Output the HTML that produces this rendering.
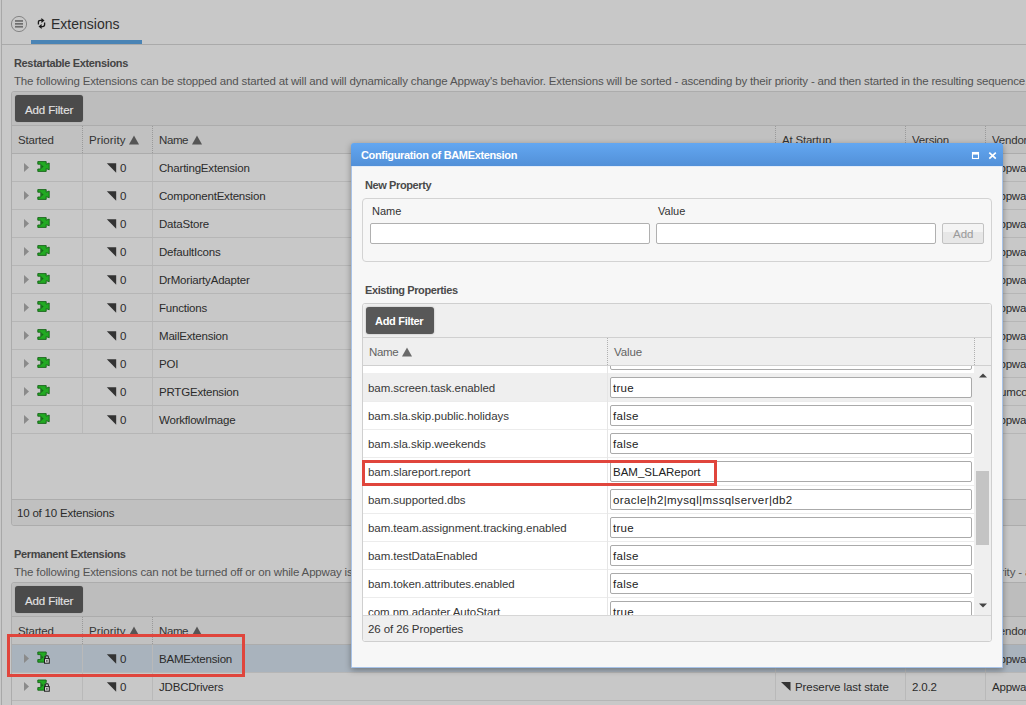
<!DOCTYPE html><html><head><meta charset='utf-8'><style>
*{margin:0;padding:0;box-sizing:border-box}
html,body{width:1026px;height:705px;overflow:hidden;background:#c8c8c8;position:relative;font-family:"Liberation Sans",sans-serif}
div{position:absolute;white-space:nowrap}
.t12{font-size:11.5px;line-height:14px;letter-spacing:-0.2px;color:#2b2b2b}
.t11{font-size:11px;line-height:14px;color:#2b2b2b}
.t14{font-size:14px;line-height:16px;color:#2b2b2b}
.b11{font-size:11px;line-height:14px;font-weight:bold;letter-spacing:-0.35px;color:#2b2b2b}
.b12{font-size:12px;line-height:14px;font-weight:bold;letter-spacing:-0.4px}
</style></head><body><div style='position:absolute;left:1px;top:0px;width:1px;height:705px;background:#a8a8a8'></div>
<div style='position:absolute;left:2px;top:44px;width:1024px;height:1px;background:#aaaaaa'></div>
<svg style='position:absolute;left:10px;top:15px' width='18' height='18' viewBox='0 0 18 18'><circle cx='9' cy='9' r='7.6' fill='none' stroke='#858585' stroke-width='1'/><rect x='5' y='5.1' width='8' height='1.7' fill='#6e6e6e'/><rect x='5' y='8' width='8' height='1.7' fill='#6e6e6e'/><rect x='5' y='10.9' width='8' height='1.7' fill='#6e6e6e'/></svg>
<svg style='position:absolute;left:36px;top:16px' width='11' height='14' viewBox='0 0 11 14'><path d='M2.4 8.4 V6.2 Q2.4 4.4 4.4 4.4 H6' fill='none' stroke='#1a1a1a' stroke-width='1.3'/><path d='M5.4 1.9 L8.5 4.4 L5.4 6.9 Z' fill='#1a1a1a'/><path d='M8.6 6.6 V8.6 Q8.6 10.6 6.6 10.6 H5' fill='none' stroke='#1a1a1a' stroke-width='1.3'/><path d='M5.6 8.1 L2.5 10.6 L5.6 13.1 Z' fill='#1a1a1a'/></svg>
<div class='t14' style='left:51px;top:16px;color:#2d2d2d;'>Extensions</div>
<div style='position:absolute;left:31px;top:40px;width:111px;height:4px;background:#4a84b5'></div>
<div class='b11' style='left:14px;top:56px;color:#444;'>Restartable Extensions</div>
<div class='t12' style='left:14px;top:74px;color:#535353;letter-spacing:-0.16px'>The following Extensions can be stopped and started at will and will dynamically change Appway's behavior. Extensions will be sorted - ascending by their priority - and then started in the resulting sequence.</div>
<div style='position:absolute;left:11px;top:91px;width:1029px;height:435px;border:1px solid #acacac;border-radius:3px;background:#c8c8c8'></div>
<div style='position:absolute;left:12px;top:92px;width:1028px;height:33px;background:#bdbdbd;border-radius:3px 0 0 0'></div>
<div style='position:absolute;left:12px;top:125px;width:1028px;height:1px;background:#acacac'></div>
<div style='position:absolute;left:15px;top:95px;width:68px;height:27px;background:#4b4b4b;border-radius:3px;box-shadow:0 0 1px rgba(0,0,0,.3)'></div>
<div class='b12' style='left:25px;top:103px;color:#e2e2e2;font-weight:normal;font-size:11.5px;-webkit-text-stroke:0.15px #e2e2e2;letter-spacing:-0.1px'>Add Filter</div>
<div style='position:absolute;left:12px;top:126px;width:1028px;height:27px;background:#c1c1c1'></div>
<div style='position:absolute;left:12px;top:153px;width:1028px;height:1px;background:#acacac'></div>
<div style='position:absolute;left:82px;top:126px;width:1px;height:27px;border-left:1px dotted #9a9a9a'></div>
<div style='position:absolute;left:152px;top:126px;width:1px;height:27px;border-left:1px dotted #9a9a9a'></div>
<div style='position:absolute;left:775px;top:126px;width:1px;height:27px;border-left:1px dotted #9a9a9a'></div>
<div style='position:absolute;left:905px;top:126px;width:1px;height:27px;border-left:1px dotted #9a9a9a'></div>
<div style='position:absolute;left:985px;top:126px;width:1px;height:27px;border-left:1px dotted #9a9a9a'></div>
<div class='t12' style='left:18px;top:133px;color:#333;'>Started</div>
<div class='t12' style='left:89px;top:133px;color:#333;letter-spacing:0.1px'>Priority</div>
<svg style='position:absolute;left:129px;top:135px' width='11' height='10'><path d='M0 9.6 L5 0.6 L10 9.6 Z' fill='#555'/></svg>
<div class='t12' style='left:159px;top:133px;color:#333;letter-spacing:-0.40px'>Name</div>
<svg style='position:absolute;left:192px;top:135px' width='11' height='10'><path d='M0 9.6 L5 0.6 L10 9.6 Z' fill='#555'/></svg>
<div class='t12' style='left:782px;top:133px;color:#333;'>At Startup</div>
<div class='t12' style='left:912px;top:133px;color:#333;'>Version</div>
<div class='t12' style='left:992px;top:133px;color:#333;'>Vendor</div>
<div style='position:absolute;left:12px;top:181px;width:1028px;height:1px;background:#b6b6b6'></div>
<div style='position:absolute;left:82px;top:154px;width:1px;height:27px;background:#b9b9b9'></div>
<div style='position:absolute;left:152px;top:154px;width:1px;height:27px;background:#b9b9b9'></div>
<div style='position:absolute;left:775px;top:154px;width:1px;height:27px;background:#b9b9b9'></div>
<div style='position:absolute;left:905px;top:154px;width:1px;height:27px;background:#b9b9b9'></div>
<div style='position:absolute;left:985px;top:154px;width:1px;height:27px;background:#b9b9b9'></div>
<svg style='position:absolute;left:24px;top:163px' width='6' height='9'><path d='M0 0 L5 4.5 L0 9 Z' fill='#8a8a8a'/></svg>
<svg style='position:absolute;left:36px;top:160px' width='14' height='13' viewBox='0 0 14 13'><path d='M1.8 1.6 H10.2 V4.2 L13.2 3 V9.8 L10.2 8.6 V11.4 H1.8 V9 H4.8 V4.2 H1.8 Z' fill='#22aa22' stroke='#17631a' stroke-width='0.9' stroke-linejoin='round'/><path d='M5.4 4.8 L7.6 6.6 L5.4 8.4 Z' fill='#17631a'/></svg>
<svg style='position:absolute;left:106px;top:163px' width='11' height='10'><path d='M0.8 0.3 H10.2 V9.7 Z' fill='#333'/></svg>
<div class='t12' style='left:120px;top:161px;color:#2b2b2b;'>0</div>
<div class='t12' style='left:159px;top:161px;color:#2b2b2b;'>ChartingExtension</div>
<div class='t12' style='left:992px;top:161px;color:#2b2b2b;'>Appway</div>
<div style='position:absolute;left:12px;top:209px;width:1028px;height:1px;background:#b6b6b6'></div>
<div style='position:absolute;left:82px;top:182px;width:1px;height:27px;background:#b9b9b9'></div>
<div style='position:absolute;left:152px;top:182px;width:1px;height:27px;background:#b9b9b9'></div>
<div style='position:absolute;left:775px;top:182px;width:1px;height:27px;background:#b9b9b9'></div>
<div style='position:absolute;left:905px;top:182px;width:1px;height:27px;background:#b9b9b9'></div>
<div style='position:absolute;left:985px;top:182px;width:1px;height:27px;background:#b9b9b9'></div>
<svg style='position:absolute;left:24px;top:191px' width='6' height='9'><path d='M0 0 L5 4.5 L0 9 Z' fill='#8a8a8a'/></svg>
<svg style='position:absolute;left:36px;top:188px' width='14' height='13' viewBox='0 0 14 13'><path d='M1.8 1.6 H10.2 V4.2 L13.2 3 V9.8 L10.2 8.6 V11.4 H1.8 V9 H4.8 V4.2 H1.8 Z' fill='#22aa22' stroke='#17631a' stroke-width='0.9' stroke-linejoin='round'/><path d='M5.4 4.8 L7.6 6.6 L5.4 8.4 Z' fill='#17631a'/></svg>
<svg style='position:absolute;left:106px;top:191px' width='11' height='10'><path d='M0.8 0.3 H10.2 V9.7 Z' fill='#333'/></svg>
<div class='t12' style='left:120px;top:189px;color:#2b2b2b;'>0</div>
<div class='t12' style='left:159px;top:189px;color:#2b2b2b;'>ComponentExtension</div>
<div class='t12' style='left:992px;top:189px;color:#2b2b2b;'>Appway</div>
<div style='position:absolute;left:12px;top:237px;width:1028px;height:1px;background:#b6b6b6'></div>
<div style='position:absolute;left:82px;top:210px;width:1px;height:27px;background:#b9b9b9'></div>
<div style='position:absolute;left:152px;top:210px;width:1px;height:27px;background:#b9b9b9'></div>
<div style='position:absolute;left:775px;top:210px;width:1px;height:27px;background:#b9b9b9'></div>
<div style='position:absolute;left:905px;top:210px;width:1px;height:27px;background:#b9b9b9'></div>
<div style='position:absolute;left:985px;top:210px;width:1px;height:27px;background:#b9b9b9'></div>
<svg style='position:absolute;left:24px;top:219px' width='6' height='9'><path d='M0 0 L5 4.5 L0 9 Z' fill='#8a8a8a'/></svg>
<svg style='position:absolute;left:36px;top:216px' width='14' height='13' viewBox='0 0 14 13'><path d='M1.8 1.6 H10.2 V4.2 L13.2 3 V9.8 L10.2 8.6 V11.4 H1.8 V9 H4.8 V4.2 H1.8 Z' fill='#22aa22' stroke='#17631a' stroke-width='0.9' stroke-linejoin='round'/><path d='M5.4 4.8 L7.6 6.6 L5.4 8.4 Z' fill='#17631a'/></svg>
<svg style='position:absolute;left:106px;top:219px' width='11' height='10'><path d='M0.8 0.3 H10.2 V9.7 Z' fill='#333'/></svg>
<div class='t12' style='left:120px;top:217px;color:#2b2b2b;'>0</div>
<div class='t12' style='left:159px;top:217px;color:#2b2b2b;'>DataStore</div>
<div class='t12' style='left:992px;top:217px;color:#2b2b2b;'>Appway</div>
<div style='position:absolute;left:12px;top:265px;width:1028px;height:1px;background:#b6b6b6'></div>
<div style='position:absolute;left:82px;top:238px;width:1px;height:27px;background:#b9b9b9'></div>
<div style='position:absolute;left:152px;top:238px;width:1px;height:27px;background:#b9b9b9'></div>
<div style='position:absolute;left:775px;top:238px;width:1px;height:27px;background:#b9b9b9'></div>
<div style='position:absolute;left:905px;top:238px;width:1px;height:27px;background:#b9b9b9'></div>
<div style='position:absolute;left:985px;top:238px;width:1px;height:27px;background:#b9b9b9'></div>
<svg style='position:absolute;left:24px;top:247px' width='6' height='9'><path d='M0 0 L5 4.5 L0 9 Z' fill='#8a8a8a'/></svg>
<svg style='position:absolute;left:36px;top:244px' width='14' height='13' viewBox='0 0 14 13'><path d='M1.8 1.6 H10.2 V4.2 L13.2 3 V9.8 L10.2 8.6 V11.4 H1.8 V9 H4.8 V4.2 H1.8 Z' fill='#22aa22' stroke='#17631a' stroke-width='0.9' stroke-linejoin='round'/><path d='M5.4 4.8 L7.6 6.6 L5.4 8.4 Z' fill='#17631a'/></svg>
<svg style='position:absolute;left:106px;top:247px' width='11' height='10'><path d='M0.8 0.3 H10.2 V9.7 Z' fill='#333'/></svg>
<div class='t12' style='left:120px;top:245px;color:#2b2b2b;'>0</div>
<div class='t12' style='left:159px;top:245px;color:#2b2b2b;'>DefaultIcons</div>
<div class='t12' style='left:992px;top:245px;color:#2b2b2b;'>Appway</div>
<div style='position:absolute;left:12px;top:293px;width:1028px;height:1px;background:#b6b6b6'></div>
<div style='position:absolute;left:82px;top:266px;width:1px;height:27px;background:#b9b9b9'></div>
<div style='position:absolute;left:152px;top:266px;width:1px;height:27px;background:#b9b9b9'></div>
<div style='position:absolute;left:775px;top:266px;width:1px;height:27px;background:#b9b9b9'></div>
<div style='position:absolute;left:905px;top:266px;width:1px;height:27px;background:#b9b9b9'></div>
<div style='position:absolute;left:985px;top:266px;width:1px;height:27px;background:#b9b9b9'></div>
<svg style='position:absolute;left:24px;top:275px' width='6' height='9'><path d='M0 0 L5 4.5 L0 9 Z' fill='#8a8a8a'/></svg>
<svg style='position:absolute;left:36px;top:272px' width='14' height='13' viewBox='0 0 14 13'><path d='M1.8 1.6 H10.2 V4.2 L13.2 3 V9.8 L10.2 8.6 V11.4 H1.8 V9 H4.8 V4.2 H1.8 Z' fill='#22aa22' stroke='#17631a' stroke-width='0.9' stroke-linejoin='round'/><path d='M5.4 4.8 L7.6 6.6 L5.4 8.4 Z' fill='#17631a'/></svg>
<svg style='position:absolute;left:106px;top:275px' width='11' height='10'><path d='M0.8 0.3 H10.2 V9.7 Z' fill='#333'/></svg>
<div class='t12' style='left:120px;top:273px;color:#2b2b2b;'>0</div>
<div class='t12' style='left:159px;top:273px;color:#2b2b2b;'>DrMoriartyAdapter</div>
<div class='t12' style='left:992px;top:273px;color:#2b2b2b;'>Appway</div>
<div style='position:absolute;left:12px;top:321px;width:1028px;height:1px;background:#b6b6b6'></div>
<div style='position:absolute;left:82px;top:294px;width:1px;height:27px;background:#b9b9b9'></div>
<div style='position:absolute;left:152px;top:294px;width:1px;height:27px;background:#b9b9b9'></div>
<div style='position:absolute;left:775px;top:294px;width:1px;height:27px;background:#b9b9b9'></div>
<div style='position:absolute;left:905px;top:294px;width:1px;height:27px;background:#b9b9b9'></div>
<div style='position:absolute;left:985px;top:294px;width:1px;height:27px;background:#b9b9b9'></div>
<svg style='position:absolute;left:24px;top:303px' width='6' height='9'><path d='M0 0 L5 4.5 L0 9 Z' fill='#8a8a8a'/></svg>
<svg style='position:absolute;left:36px;top:300px' width='14' height='13' viewBox='0 0 14 13'><path d='M1.8 1.6 H10.2 V4.2 L13.2 3 V9.8 L10.2 8.6 V11.4 H1.8 V9 H4.8 V4.2 H1.8 Z' fill='#22aa22' stroke='#17631a' stroke-width='0.9' stroke-linejoin='round'/><path d='M5.4 4.8 L7.6 6.6 L5.4 8.4 Z' fill='#17631a'/></svg>
<svg style='position:absolute;left:106px;top:303px' width='11' height='10'><path d='M0.8 0.3 H10.2 V9.7 Z' fill='#333'/></svg>
<div class='t12' style='left:120px;top:301px;color:#2b2b2b;'>0</div>
<div class='t12' style='left:159px;top:301px;color:#2b2b2b;'>Functions</div>
<div class='t12' style='left:992px;top:301px;color:#2b2b2b;'>Appway</div>
<div style='position:absolute;left:12px;top:349px;width:1028px;height:1px;background:#b6b6b6'></div>
<div style='position:absolute;left:82px;top:322px;width:1px;height:27px;background:#b9b9b9'></div>
<div style='position:absolute;left:152px;top:322px;width:1px;height:27px;background:#b9b9b9'></div>
<div style='position:absolute;left:775px;top:322px;width:1px;height:27px;background:#b9b9b9'></div>
<div style='position:absolute;left:905px;top:322px;width:1px;height:27px;background:#b9b9b9'></div>
<div style='position:absolute;left:985px;top:322px;width:1px;height:27px;background:#b9b9b9'></div>
<svg style='position:absolute;left:24px;top:331px' width='6' height='9'><path d='M0 0 L5 4.5 L0 9 Z' fill='#8a8a8a'/></svg>
<svg style='position:absolute;left:36px;top:328px' width='14' height='13' viewBox='0 0 14 13'><path d='M1.8 1.6 H10.2 V4.2 L13.2 3 V9.8 L10.2 8.6 V11.4 H1.8 V9 H4.8 V4.2 H1.8 Z' fill='#22aa22' stroke='#17631a' stroke-width='0.9' stroke-linejoin='round'/><path d='M5.4 4.8 L7.6 6.6 L5.4 8.4 Z' fill='#17631a'/></svg>
<svg style='position:absolute;left:106px;top:331px' width='11' height='10'><path d='M0.8 0.3 H10.2 V9.7 Z' fill='#333'/></svg>
<div class='t12' style='left:120px;top:329px;color:#2b2b2b;'>0</div>
<div class='t12' style='left:159px;top:329px;color:#2b2b2b;'>MailExtension</div>
<div class='t12' style='left:992px;top:329px;color:#2b2b2b;'>Appway</div>
<div style='position:absolute;left:12px;top:377px;width:1028px;height:1px;background:#b6b6b6'></div>
<div style='position:absolute;left:82px;top:350px;width:1px;height:27px;background:#b9b9b9'></div>
<div style='position:absolute;left:152px;top:350px;width:1px;height:27px;background:#b9b9b9'></div>
<div style='position:absolute;left:775px;top:350px;width:1px;height:27px;background:#b9b9b9'></div>
<div style='position:absolute;left:905px;top:350px;width:1px;height:27px;background:#b9b9b9'></div>
<div style='position:absolute;left:985px;top:350px;width:1px;height:27px;background:#b9b9b9'></div>
<svg style='position:absolute;left:24px;top:359px' width='6' height='9'><path d='M0 0 L5 4.5 L0 9 Z' fill='#8a8a8a'/></svg>
<svg style='position:absolute;left:36px;top:356px' width='14' height='13' viewBox='0 0 14 13'><path d='M1.8 1.6 H10.2 V4.2 L13.2 3 V9.8 L10.2 8.6 V11.4 H1.8 V9 H4.8 V4.2 H1.8 Z' fill='#22aa22' stroke='#17631a' stroke-width='0.9' stroke-linejoin='round'/><path d='M5.4 4.8 L7.6 6.6 L5.4 8.4 Z' fill='#17631a'/></svg>
<svg style='position:absolute;left:106px;top:359px' width='11' height='10'><path d='M0.8 0.3 H10.2 V9.7 Z' fill='#333'/></svg>
<div class='t12' style='left:120px;top:357px;color:#2b2b2b;'>0</div>
<div class='t12' style='left:159px;top:357px;color:#2b2b2b;'>POI</div>
<div class='t12' style='left:992px;top:357px;color:#2b2b2b;'>Appway</div>
<div style='position:absolute;left:12px;top:405px;width:1028px;height:1px;background:#b6b6b6'></div>
<div style='position:absolute;left:82px;top:378px;width:1px;height:27px;background:#b9b9b9'></div>
<div style='position:absolute;left:152px;top:378px;width:1px;height:27px;background:#b9b9b9'></div>
<div style='position:absolute;left:775px;top:378px;width:1px;height:27px;background:#b9b9b9'></div>
<div style='position:absolute;left:905px;top:378px;width:1px;height:27px;background:#b9b9b9'></div>
<div style='position:absolute;left:985px;top:378px;width:1px;height:27px;background:#b9b9b9'></div>
<svg style='position:absolute;left:24px;top:387px' width='6' height='9'><path d='M0 0 L5 4.5 L0 9 Z' fill='#8a8a8a'/></svg>
<svg style='position:absolute;left:36px;top:384px' width='14' height='13' viewBox='0 0 14 13'><path d='M1.8 1.6 H10.2 V4.2 L13.2 3 V9.8 L10.2 8.6 V11.4 H1.8 V9 H4.8 V4.2 H1.8 Z' fill='#22aa22' stroke='#17631a' stroke-width='0.9' stroke-linejoin='round'/><path d='M5.4 4.8 L7.6 6.6 L5.4 8.4 Z' fill='#17631a'/></svg>
<svg style='position:absolute;left:106px;top:387px' width='11' height='10'><path d='M0.8 0.3 H10.2 V9.7 Z' fill='#333'/></svg>
<div class='t12' style='left:120px;top:385px;color:#2b2b2b;'>0</div>
<div class='t12' style='left:159px;top:385px;color:#2b2b2b;'>PRTGExtension</div>
<div class='t12' style='left:992px;top:385px;color:#2b2b2b;'>Numcom</div>
<div style='position:absolute;left:12px;top:433px;width:1028px;height:1px;background:#b6b6b6'></div>
<div style='position:absolute;left:82px;top:406px;width:1px;height:27px;background:#b9b9b9'></div>
<div style='position:absolute;left:152px;top:406px;width:1px;height:27px;background:#b9b9b9'></div>
<div style='position:absolute;left:775px;top:406px;width:1px;height:27px;background:#b9b9b9'></div>
<div style='position:absolute;left:905px;top:406px;width:1px;height:27px;background:#b9b9b9'></div>
<div style='position:absolute;left:985px;top:406px;width:1px;height:27px;background:#b9b9b9'></div>
<svg style='position:absolute;left:24px;top:415px' width='6' height='9'><path d='M0 0 L5 4.5 L0 9 Z' fill='#8a8a8a'/></svg>
<svg style='position:absolute;left:36px;top:412px' width='14' height='13' viewBox='0 0 14 13'><path d='M1.8 1.6 H10.2 V4.2 L13.2 3 V9.8 L10.2 8.6 V11.4 H1.8 V9 H4.8 V4.2 H1.8 Z' fill='#22aa22' stroke='#17631a' stroke-width='0.9' stroke-linejoin='round'/><path d='M5.4 4.8 L7.6 6.6 L5.4 8.4 Z' fill='#17631a'/></svg>
<svg style='position:absolute;left:106px;top:415px' width='11' height='10'><path d='M0.8 0.3 H10.2 V9.7 Z' fill='#333'/></svg>
<div class='t12' style='left:120px;top:413px;color:#2b2b2b;'>0</div>
<div class='t12' style='left:159px;top:413px;color:#2b2b2b;'>WorkflowImage</div>
<div class='t12' style='left:992px;top:413px;color:#2b2b2b;'>Appway</div>
<div style='position:absolute;left:12px;top:499px;width:1028px;height:1px;background:#acacac'></div>
<div style='position:absolute;left:12px;top:500px;width:1028px;height:25px;background:#c0c0c0;border-radius:0 0 0 3px'></div>
<div class='t12' style='left:17px;top:506px;color:#2b2b2b;'>10 of 10 Extensions</div>
<div class='b11' style='left:14px;top:547px;color:#444;'>Permanent Extensions</div>
<div class='t12' style='left:14px;top:565px;color:#535353;letter-spacing:-0.16px'>The following Extensions can not be turned off or on while Appway is running. Extensions will be sorted - ascending by their priority - and then started in the resulting sequence.</div>
<div style='position:absolute;left:11px;top:582px;width:1029px;height:178px;border:1px solid #acacac;border-radius:3px;background:#c8c8c8'></div>
<div style='position:absolute;left:12px;top:583px;width:1028px;height:33px;background:#bdbdbd;border-radius:3px 0 0 0'></div>
<div style='position:absolute;left:12px;top:616px;width:1028px;height:1px;background:#acacac'></div>
<div style='position:absolute;left:15px;top:586px;width:68px;height:27px;background:#4b4b4b;border-radius:3px;box-shadow:0 0 1px rgba(0,0,0,.3)'></div>
<div class='b12' style='left:25px;top:594px;color:#e2e2e2;font-weight:normal;font-size:11.5px;-webkit-text-stroke:0.15px #e2e2e2;letter-spacing:-0.1px'>Add Filter</div>
<div style='position:absolute;left:12px;top:617px;width:1028px;height:27px;background:#c1c1c1'></div>
<div style='position:absolute;left:12px;top:644px;width:1028px;height:1px;background:#acacac'></div>
<div style='position:absolute;left:82px;top:617px;width:1px;height:27px;border-left:1px dotted #9a9a9a'></div>
<div style='position:absolute;left:152px;top:617px;width:1px;height:27px;border-left:1px dotted #9a9a9a'></div>
<div style='position:absolute;left:775px;top:617px;width:1px;height:27px;border-left:1px dotted #9a9a9a'></div>
<div style='position:absolute;left:905px;top:617px;width:1px;height:27px;border-left:1px dotted #9a9a9a'></div>
<div style='position:absolute;left:985px;top:617px;width:1px;height:27px;border-left:1px dotted #9a9a9a'></div>
<div class='t12' style='left:18px;top:624px;color:#333;'>Started</div>
<div class='t12' style='left:89px;top:624px;color:#333;letter-spacing:0.1px'>Priority</div>
<svg style='position:absolute;left:129px;top:626px' width='11' height='10'><path d='M0 9.6 L5 0.6 L10 9.6 Z' fill='#555'/></svg>
<div class='t12' style='left:159px;top:624px;color:#333;letter-spacing:-0.40px'>Name</div>
<svg style='position:absolute;left:192px;top:626px' width='11' height='10'><path d='M0 9.6 L5 0.6 L10 9.6 Z' fill='#555'/></svg>
<div class='t12' style='left:782px;top:624px;color:#333;'>At Startup</div>
<div class='t12' style='left:912px;top:624px;color:#333;'>Version</div>
<div class='t12' style='left:992px;top:624px;color:#333;'>Vendor</div>
<div style='position:absolute;left:12px;top:645px;width:1028px;height:28px;background:#a9b3bd'></div>
<div style='position:absolute;left:12px;top:672px;width:1028px;height:1px;background:#b6b6b6'></div>
<div style='position:absolute;left:82px;top:645px;width:1px;height:27px;background:#b9b9b9'></div>
<div style='position:absolute;left:152px;top:645px;width:1px;height:27px;background:#b9b9b9'></div>
<div style='position:absolute;left:775px;top:645px;width:1px;height:27px;background:#b9b9b9'></div>
<div style='position:absolute;left:905px;top:645px;width:1px;height:27px;background:#b9b9b9'></div>
<div style='position:absolute;left:985px;top:645px;width:1px;height:27px;background:#b9b9b9'></div>
<svg style='position:absolute;left:24px;top:654px' width='6' height='9'><path d='M0 0 L5 4.5 L0 9 Z' fill='#8a8a8a'/></svg>
<svg style='position:absolute;left:36px;top:650px' width='15' height='14' viewBox='0 0 15 14'><path d='M1.8 2 H10.2 V4.6 L8.6 6 V12.2 H1.8 V9.6 H4.8 V4.6 H1.8 Z' fill='#22aa22' stroke='#17631a' stroke-width='0.9' stroke-linejoin='round'/><path d='M5.4 5.4 L7.4 7.2 L5.4 9 Z' fill='#17631a'/><path d='M9.3 8.6 V7.2 A1.6 1.6 0 0 1 12.5 7.2 V8.6' fill='none' stroke='#2e2e2e' stroke-width='1.1'/><rect x='8.5' y='8.6' width='4.8' height='4.6' fill='#d6d6d6' stroke='#1e1e1e' stroke-width='1'/><rect x='10.4' y='10' width='1' height='1.8' fill='#222'/></svg>
<svg style='position:absolute;left:106px;top:654px' width='11' height='10'><path d='M0.8 0.3 H10.2 V9.7 Z' fill='#333'/></svg>
<div class='t12' style='left:120px;top:652px;color:#2b2b2b;'>0</div>
<div class='t12' style='left:159px;top:652px;color:#2b2b2b;'>BAMExtension</div>
<div class='t12' style='left:992px;top:652px;color:#2b2b2b;'>Appway</div>
<div style='position:absolute;left:12px;top:700px;width:1028px;height:1px;background:#b6b6b6'></div>
<div style='position:absolute;left:82px;top:673px;width:1px;height:27px;background:#b9b9b9'></div>
<div style='position:absolute;left:152px;top:673px;width:1px;height:27px;background:#b9b9b9'></div>
<div style='position:absolute;left:775px;top:673px;width:1px;height:27px;background:#b9b9b9'></div>
<div style='position:absolute;left:905px;top:673px;width:1px;height:27px;background:#b9b9b9'></div>
<div style='position:absolute;left:985px;top:673px;width:1px;height:27px;background:#b9b9b9'></div>
<svg style='position:absolute;left:24px;top:682px' width='6' height='9'><path d='M0 0 L5 4.5 L0 9 Z' fill='#8a8a8a'/></svg>
<svg style='position:absolute;left:36px;top:678px' width='15' height='14' viewBox='0 0 15 14'><path d='M1.8 2 H10.2 V4.6 L8.6 6 V12.2 H1.8 V9.6 H4.8 V4.6 H1.8 Z' fill='#22aa22' stroke='#17631a' stroke-width='0.9' stroke-linejoin='round'/><path d='M5.4 5.4 L7.4 7.2 L5.4 9 Z' fill='#17631a'/><path d='M9.3 8.6 V7.2 A1.6 1.6 0 0 1 12.5 7.2 V8.6' fill='none' stroke='#2e2e2e' stroke-width='1.1'/><rect x='8.5' y='8.6' width='4.8' height='4.6' fill='#d6d6d6' stroke='#1e1e1e' stroke-width='1'/><rect x='10.4' y='10' width='1' height='1.8' fill='#222'/></svg>
<svg style='position:absolute;left:106px;top:682px' width='11' height='10'><path d='M0.8 0.3 H10.2 V9.7 Z' fill='#333'/></svg>
<div class='t12' style='left:120px;top:680px;color:#2b2b2b;'>0</div>
<div class='t12' style='left:159px;top:680px;color:#2b2b2b;'>JDBCDrivers</div>
<div class='t12' style='left:992px;top:680px;color:#2b2b2b;'>Appway</div>
<div class='t12' style='left:982px;top:565px;color:#535353;letter-spacing:-0.16px'>priority - and then started in the resulting sequence.</div>
<svg style='position:absolute;left:781px;top:682px' width='10' height='9'><path d='M0 0 H9.5 V9 Z' fill='#333'/></svg>
<div class='t12' style='left:795px;top:680px;color:#2b2b2b;letter-spacing:-0.08px'>Preserve last state</div>
<div class='t12' style='left:912px;top:680px;color:#2b2b2b;'>2.0.2</div>
<div style='position:absolute;left:7px;top:634px;width:238px;height:43px;border:3px solid #e0453c'></div>
<div style='position:absolute;left:351px;top:143px;width:652px;height:525px;background:#f7f7f7;border:1px solid #a8c3e8;border-radius:3px 3px 0 0;box-shadow:0 2px 6px rgba(0,0,0,.35)'></div>
<div style='position:absolute;left:351px;top:143px;width:652px;height:23px;background:linear-gradient(#63a7f1,#5290d8);border-radius:3px 3px 0 0'></div>
<div style='position:absolute;left:352px;top:166px;width:650px;height:1px;background:#e3ecf8'></div>
<div class='b11' style='left:361px;top:148px;color:#ffffff;'>Configuration of BAMExtension</div>
<svg style='position:absolute;left:971px;top:151px' width='10' height='10'><rect x='1.5' y='1.5' width='6' height='6' fill='none' stroke='#fff' stroke-width='1.1'/><rect x='1' y='1' width='7' height='2.6' fill='#fff'/></svg>
<svg style='position:absolute;left:987px;top:151px' width='10' height='10'><path d='M2.3 1.6 L8.8 7.6 M8.8 1.6 L2.3 7.6' stroke='#fff' stroke-width='1.7'/></svg>
<div class='b11' style='left:365px;top:178px;color:#4a4a4a;letter-spacing:-0.4px'>New Property</div>
<div style='position:absolute;left:362px;top:198px;width:630px;height:64px;border:1px solid #d3d3d3;border-radius:4px'></div>
<div class='t11' style='left:372px;top:204px;color:#333;'>Name</div>
<div class='t11' style='left:658px;top:204px;color:#333;'>Value</div>
<div style='position:absolute;left:370px;top:223px;width:280px;height:21px;background:#fff;border:1px solid #b0b0b0;border-radius:2px'></div>
<div style='position:absolute;left:656px;top:223px;width:280px;height:21px;background:#fff;border:1px solid #b0b0b0;border-radius:2px'></div>
<div style='position:absolute;left:942px;top:223px;width:42px;height:21px;background:linear-gradient(#f4f4f4 0,#f4f4f4 40%,#e7e7e7 40%);border:1px solid #c2c2c2;border-radius:2px'></div>
<div class='t12' style='left:953px;top:227px;color:#9a9a9a;letter-spacing:0;font-size:11.5px'>Add</div>
<div class='b11' style='left:365px;top:283px;color:#4a4a4a;letter-spacing:-0.4px'>Existing Properties</div>
<div style='position:absolute;left:362px;top:303px;width:630px;height:339px;background:#fff;border:1px solid #cfcfcf;border-radius:3px'></div>
<div style='position:absolute;left:363px;top:304px;width:628px;height:33px;background:#efefef;border-radius:3px 3px 0 0'></div>
<div style='position:absolute;left:363px;top:337px;width:628px;height:1px;background:#d0d0d0'></div>
<div style='position:absolute;left:366px;top:307px;width:68px;height:27px;background:#585858;border-radius:3px;box-shadow:0 0 2px rgba(0,0,0,.3)'></div>
<div class='b12' style='left:375px;top:314px;color:#fff;font-weight:bold;font-size:11px;letter-spacing:-0.3px'>Add Filter</div>
<div style='position:absolute;left:363px;top:338px;width:628px;height:27px;background:#efefef'></div>
<div style='position:absolute;left:363px;top:365px;width:628px;height:1px;background:#d0d0d0'></div>
<div style='position:absolute;left:607px;top:338px;width:1px;height:27px;border-left:1px dotted #b0b0b0'></div>
<div style='position:absolute;left:974px;top:338px;width:1px;height:27px;border-left:1px dotted #b0b0b0'></div>
<div class='t12' style='left:369px;top:345px;color:#636363;letter-spacing:-0.35px'>Name</div>
<svg style='position:absolute;left:402px;top:347px' width='10' height='10'><path d='M0 9.6 L5 0.4 L10 9.6 Z' fill='#6a6a6a'/></svg>
<div class='t12' style='left:614px;top:345px;color:#636363;letter-spacing:-0.10px'>Value</div>
<div style='left:363px;top:366px;width:611px;height:249px;overflow:hidden'>
<div style='left:0;top:7px;width:611px;height:1px;background:#ececec'></div>
<div style='left:244px;top:-21px;width:1px;height:28px;background:#e6e6e6'></div>
<div style='left:247px;top:-17px;width:362px;height:21px;background:#fff;border:1px solid #aaa;border-radius:2px'></div>
<div style='left:0;top:7px;width:611px;height:28px;background:#efefef'></div>
<div style='left:0;top:35px;width:611px;height:1px;background:#ececec'></div>
<div style='left:244px;top:7px;width:1px;height:28px;background:#e6e6e6'></div>
<div style='left:247px;top:11px;width:362px;height:21px;background:#fff;border:1px solid #aaa;border-radius:2px'></div>
<div class='t12' style='left:5px;top:15px;color:#383838;letter-spacing:-0.06px'>bam.screen.task.enabled</div>
<div class='t12' style='left:250px;top:15px;color:#222;letter-spacing:0.3px'>true</div>
<div style='left:0;top:63px;width:611px;height:1px;background:#ececec'></div>
<div style='left:244px;top:35px;width:1px;height:28px;background:#e6e6e6'></div>
<div style='left:247px;top:39px;width:362px;height:21px;background:#fff;border:1px solid #aaa;border-radius:2px'></div>
<div class='t12' style='left:5px;top:43px;color:#383838;letter-spacing:-0.06px'>bam.sla.skip.public.holidays</div>
<div class='t12' style='left:250px;top:43px;color:#222;letter-spacing:0.3px'>false</div>
<div style='left:0;top:91px;width:611px;height:1px;background:#ececec'></div>
<div style='left:244px;top:63px;width:1px;height:28px;background:#e6e6e6'></div>
<div style='left:247px;top:67px;width:362px;height:21px;background:#fff;border:1px solid #aaa;border-radius:2px'></div>
<div class='t12' style='left:5px;top:71px;color:#383838;letter-spacing:-0.06px'>bam.sla.skip.weekends</div>
<div class='t12' style='left:250px;top:71px;color:#222;letter-spacing:0.3px'>false</div>
<div style='left:0;top:119px;width:611px;height:1px;background:#ececec'></div>
<div style='left:244px;top:91px;width:1px;height:28px;background:#e6e6e6'></div>
<div style='left:247px;top:95px;width:362px;height:21px;background:#fff;border:1px solid #aaa;border-radius:2px'></div>
<div class='t12' style='left:5px;top:99px;color:#383838;letter-spacing:-0.06px'>bam.slareport.report</div>
<div class='t12' style='left:250px;top:99px;color:#222;letter-spacing:0px'>BAM_SLAReport</div>
<div style='left:0;top:147px;width:611px;height:1px;background:#ececec'></div>
<div style='left:244px;top:119px;width:1px;height:28px;background:#e6e6e6'></div>
<div style='left:247px;top:123px;width:362px;height:21px;background:#fff;border:1px solid #aaa;border-radius:2px'></div>
<div class='t12' style='left:5px;top:127px;color:#383838;letter-spacing:-0.06px'>bam.supported.dbs</div>
<div class='t12' style='left:250px;top:127px;color:#222;letter-spacing:0.4px'>oracle|h2|mysql|mssqlserver|db2</div>
<div style='left:0;top:175px;width:611px;height:1px;background:#ececec'></div>
<div style='left:244px;top:147px;width:1px;height:28px;background:#e6e6e6'></div>
<div style='left:247px;top:151px;width:362px;height:21px;background:#fff;border:1px solid #aaa;border-radius:2px'></div>
<div class='t12' style='left:5px;top:155px;color:#383838;letter-spacing:-0.06px'>bam.team.assignment.tracking.enabled</div>
<div class='t12' style='left:250px;top:155px;color:#222;letter-spacing:0.3px'>true</div>
<div style='left:0;top:203px;width:611px;height:1px;background:#ececec'></div>
<div style='left:244px;top:175px;width:1px;height:28px;background:#e6e6e6'></div>
<div style='left:247px;top:179px;width:362px;height:21px;background:#fff;border:1px solid #aaa;border-radius:2px'></div>
<div class='t12' style='left:5px;top:183px;color:#383838;letter-spacing:-0.06px'>bam.testDataEnabled</div>
<div class='t12' style='left:250px;top:183px;color:#222;letter-spacing:0.3px'>false</div>
<div style='left:0;top:231px;width:611px;height:1px;background:#ececec'></div>
<div style='left:244px;top:203px;width:1px;height:28px;background:#e6e6e6'></div>
<div style='left:247px;top:207px;width:362px;height:21px;background:#fff;border:1px solid #aaa;border-radius:2px'></div>
<div class='t12' style='left:5px;top:211px;color:#383838;letter-spacing:-0.06px'>bam.token.attributes.enabled</div>
<div class='t12' style='left:250px;top:211px;color:#222;letter-spacing:0.3px'>false</div>
<div style='left:0;top:259px;width:611px;height:1px;background:#ececec'></div>
<div style='left:244px;top:231px;width:1px;height:28px;background:#e6e6e6'></div>
<div style='left:247px;top:235px;width:362px;height:21px;background:#fff;border:1px solid #aaa;border-radius:2px'></div>
<div class='t12' style='left:5px;top:239px;color:#383838;letter-spacing:-0.06px'>com.nm.adapter.AutoStart</div>
<div class='t12' style='left:250px;top:239px;color:#222;letter-spacing:0.3px'>true</div>
</div>
<div style='position:absolute;left:974px;top:366px;width:17px;height:249px;background:#efefef'></div>
<div style='position:absolute;left:976px;top:471px;width:13px;height:74px;background:#c4c4c4'></div>
<svg style='position:absolute;left:979px;top:373px' width='8' height='5'><path d='M0 4.5 L4 0.5 L8 4.5 Z' fill='#444'/></svg>
<svg style='position:absolute;left:979px;top:603px' width='8' height='5'><path d='M0 0.5 L4 4.5 L8 0.5 Z' fill='#444'/></svg>
<div style='position:absolute;left:363px;top:615px;width:628px;height:1px;background:#d6d6d6'></div>
<div style='position:absolute;left:363px;top:616px;width:628px;height:25px;background:#efefef;border-radius:0 0 3px 3px'></div>
<div class='t12' style='left:368px;top:622px;color:#333;letter-spacing:-0.1px'>26 of 26 Properties</div>
<div style='position:absolute;left:362px;top:460px;width:355px;height:26px;border:3px solid #e0453c'></div></body></html>
